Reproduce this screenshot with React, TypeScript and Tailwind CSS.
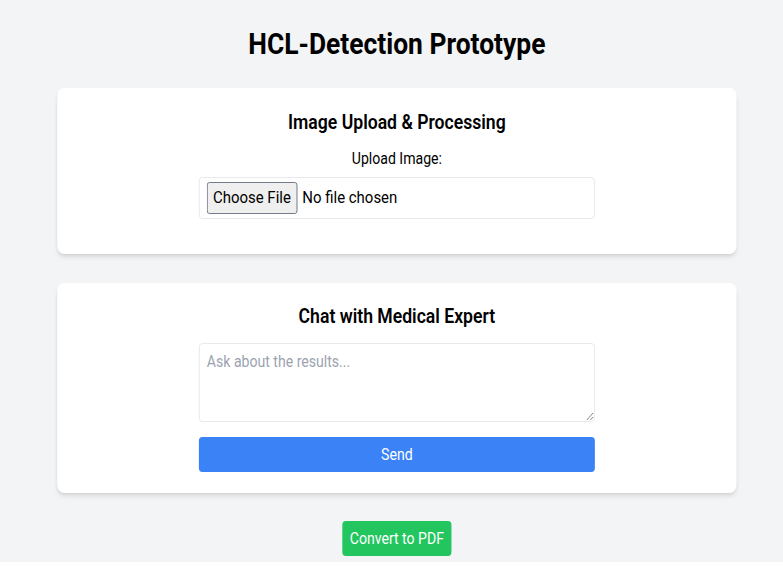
export default function App() {
  return (
    <div className="min-h-screen w-full overflow-hidden bg-white" style={{ fontFamily: "Roboto, 'Liberation Sans', sans-serif" }}>
      <div className="w-[890px] origin-top-left scale-x-[0.88] bg-gray-100 pt-[26px] pb-[6px] text-black">
        <div className="ml-[65px] w-[772px] flex flex-col">
          <h1 className="text-3xl font-bold text-center leading-9">HCL-Detection Prototype</h1>
          <div className="mt-[26px] flex flex-col gap-[29px]">
            <section className="bg-white rounded-lg shadow-md pt-[20px] pb-[35px] flex flex-col items-center">
              <h2 className="text-xl font-semibold leading-7">Image Upload &amp; Processing</h2>
              <p className="mt-[11px] text-base leading-6">Upload Image:</p>
              <div className="mt-[6px] w-[450px] h-[42px] border border-gray-200 rounded flex items-center px-2">
                <input
                  type="file"
                  className="text-[17px] file:mr-[6px] file:px-[6px] file:py-[2px] file:border file:border-gray-500 file:rounded-[3px] file:bg-[#efefef] file:text-[17px] file:text-black"
                />
              </div>
            </section>
            <section className="bg-white rounded-lg shadow-md pt-[19px] pb-[21px] flex flex-col items-center">
              <h2 className="text-xl font-semibold leading-7">Chat with Medical Expert</h2>
              <textarea
                className="mt-[13px] w-[450px] h-[79px] border border-gray-200 rounded px-2 py-[6px] text-base placeholder:text-[#9ca3af] outline-none"
                placeholder="Ask about the results..."
              />
              <button className="mt-[15px] w-[450px] h-[35px] bg-[#3b82f6] text-white rounded text-base">Send</button>
            </section>
          </div>
          <div className="flex justify-center mt-[28px]">
            <button className="bg-[#22c55e] text-white rounded px-2 h-[35px] text-base">Convert to PDF</button>
          </div>
        </div>
      </div>
    </div>
  );
}
